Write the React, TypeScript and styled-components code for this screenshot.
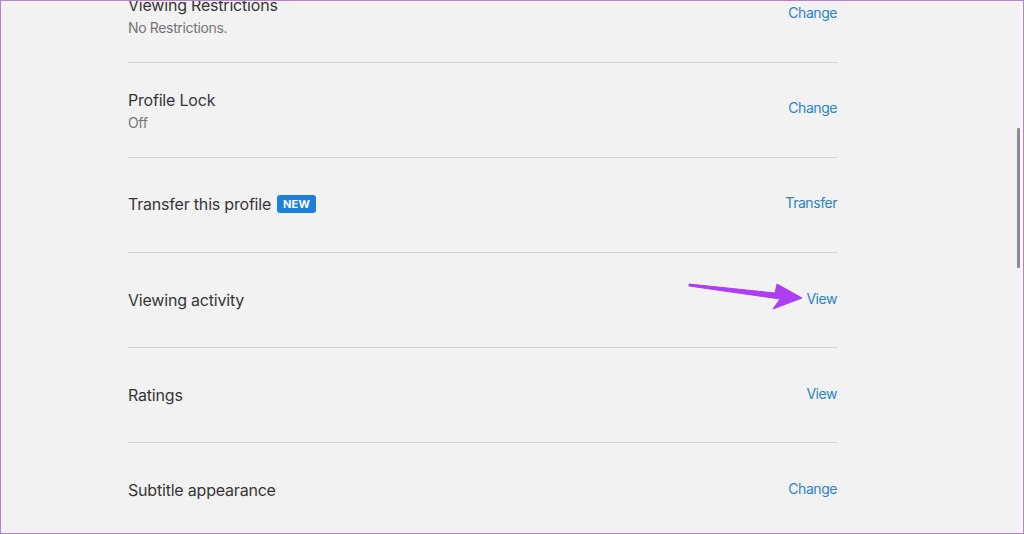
import React from "react";
import styled, { createGlobalStyle } from "styled-components";

const Global = createGlobalStyle`
  html, body { margin: 0; padding: 0; background: #f2f2f2; }
  body { font-family: Inter, "Noto Sans", Roboto, sans-serif; }
  * { box-sizing: border-box; }
`;

const Frame = styled.div`
  width: 1024px;
  height: 534px;
  border: 1px solid #b583cc;
  box-shadow: inset 0 0 0 1px #f7eef9;
  background: #f2f2f2;
  display: flex;
  overflow: hidden;
  position: relative;
`;

const Main = styled.div`
  flex: 1;
  overflow: hidden;
  position: relative;
`;

const ScrollTrack = styled.div`
  width: 8px;
  position: relative;
  background: #f3f3f3;
  border-right: 3px solid #fbf7fb;
`;

const Thumb = styled.div`
  position: absolute;
  left: 2px;
  top: 127px;
  width: 3px;
  height: 140px;
  background: #8c8c8c;
  border-radius: 1px;
`;

const List = styled.div`
  margin-top: -33px;
  margin-left: 127px;
  width: 709px;
  display: flex;
  flex-direction: column;
`;

const Row = styled.div`
  height: 95px;
  display: flex;
  align-items: center;
  justify-content: space-between;
  border-bottom: 1px solid #d3d3d3;
`;

const Info = styled.div<{ $shift?: number }>`
  display: flex;
  flex-direction: column;
  gap: 2px;
  margin-top: ${(p) => p.$shift ?? 0}px;
`;

const TitleLine = styled.div`
  display: flex;
  align-items: center;
  gap: 6px;
`;

const Title = styled.span`
  font-size: 16px;
  line-height: 22px;
  color: #363636;
  letter-spacing: -0.2px;
`;

const Sub = styled.span`
  font-size: 14px;
  line-height: 20px;
  color: #757575;
  letter-spacing: -0.35px;
`;

const Badge = styled.span`
  background: #1b7fdb;
  color: #fff;
  font-size: 11px;
  font-weight: 700;
  line-height: 18px;
  padding: 0 6px;
  border-radius: 3px;
  letter-spacing: 0.1px;
`;

const Action = styled.a<{ $shift?: number }>`
  font-size: 14px;
  color: #2b84c6;
  text-decoration: none;
  cursor: pointer;
  letter-spacing: -0.45px;
  margin-top: ${(p) => p.$shift ?? 0}px;
`;

const Arrow = styled.svg`
  position: absolute;
  left: 686px;
  top: 280px;
  overflow: visible;
`;

type Item = { title: string; sub?: string; action: string; badge?: string; shift?: number; infoShift?: number };

const items: Item[] = [
  { title: "Viewing Restrictions", sub: "No Restrictions.", action: "Change", shift: -6, infoShift: 2 },
  { title: "Profile Lock", sub: "Off", action: "Change", shift: -6, infoShift: 2 },
  { title: "Transfer this profile", badge: "NEW", action: "Transfer", shift: -5, infoShift: -2 },
  { title: "Viewing activity", action: "View", shift: -4, infoShift: -1 },
  { title: "Ratings", action: "View", shift: -4, infoShift: -1 },
  { title: "Subtitle appearance", action: "Change", shift: -4, infoShift: -1 },
];

export default function App() {
  return (
    <>
      <Global />
      <Frame>
        <Main>
          <List>
            {items.map((it) => (
              <Row key={it.title}>
                <Info $shift={it.infoShift}>
                  <TitleLine>
                    <Title>{it.title}</Title>
                    {it.badge && <Badge>{it.badge}</Badge>}
                  </TitleLine>
                  {it.sub && <Sub>{it.sub}</Sub>}
                </Info>
                <Action $shift={it.shift}>{it.action}</Action>
              </Row>
            ))}
          </List>
          <Arrow width="120" height="32" viewBox="0 0 120 32">
            <path
              d="M2 3 L88 12 L90 3 L115 17 L86 28 L93 18 L2 5 Z"
              fill="#ad3ef2"
              stroke="#ad3ef2"
              strokeWidth="1"
              strokeLinejoin="round"
            />
          </Arrow>
        </Main>
        <ScrollTrack>
          <Thumb />
        </ScrollTrack>
      </Frame>
    </>
  );
}
